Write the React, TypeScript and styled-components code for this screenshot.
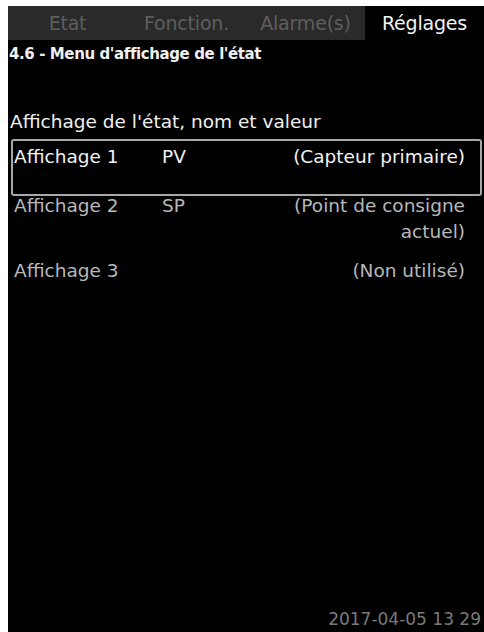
import styled, { createGlobalStyle } from 'styled-components'

const GlobalStyle = createGlobalStyle`
  html, body {
    margin: 0;
    background: #fff;
  }
`

const tabs = ['Etat', 'Fonction.', 'Alarme(s)', 'Réglages']

const rows = [
  { label: 'Affichage 1', code: 'PV', value: '(Capteur primaire)', selected: true },
  { label: 'Affichage 2', code: 'SP', value: '(Point de consigne actuel)', selected: false },
  { label: 'Affichage 3', code: '', value: '(Non utilisé)', selected: false }
]

export default function App () {
  return (
    <>
      <GlobalStyle />
      <Screen>
        <TabBar>
          {tabs.map((t, i) => (
            <Tab key={t} active={i === 3}>{t}</Tab>
          ))}
        </TabBar>
        <Breadcrumb>4.6 - Menu d'affichage de l'état</Breadcrumb>
        <SectionTitle>Affichage de l'état, nom et valeur</SectionTitle>
        <List>
          {rows.map(r => (
            <Row key={r.label} selected={r.selected}>
              <Label>{r.label}</Label>
              <Code>{r.code}</Code>
              <Value>{r.value}</Value>
            </Row>
          ))}
        </List>
        <Footer>2017-04-05 13 29</Footer>
      </Screen>
    </>
  )
}

const Screen = styled.div`
  display: flex;
  flex-direction: column;
  margin: 6px 0 0 8px;
  height: 626px;
  width: 476px;
  background: #000;
  font-family: 'DejaVu Sans', sans-serif;
  color: #fff;
`

const TabBar = styled.div`
  display: grid;
  grid-template-columns: repeat(4, 1fr);
  height: 34px;
  background: #2a2a2a;
`

const Tab = styled.div<{ active: boolean }>`
  display: flex;
  align-items: center;
  justify-content: center;
  font-size: 19px;
  letter-spacing: -0.2px;
  background: ${p => (p.active ? '#000' : 'transparent')};
  color: ${p => (p.active ? '#f2f2f2' : '#5e5e5e')};
`

const Breadcrumb = styled.div`
  padding: 5px 0 0 1px;
  font-size: 15px;
  font-weight: bold;
  letter-spacing: -0.4px;
  color: #f0f0f0;
`

const SectionTitle = styled.div`
  margin-top: 48px;
  padding-left: 2px;
  font-size: 18.5px;
  color: #f0f0f0;
`

const List = styled.div`
  display: flex;
  flex-direction: column;
  margin-top: 7px;
`

const Row = styled.div<{ selected: boolean }>`
  display: grid;
  grid-template-columns: 148px 1fr auto;
  align-items: start;
  margin: ${p => (p.selected ? '0 2px -3px 3px' : '0 2px 0 3px')};
  padding: ${p => (p.selected ? '3px 15px 24px 1px' : '0 17px 13px 3px')};
  border: ${p => (p.selected ? '2px solid #a8a8a8' : 'none')};
  border-radius: 3px;
  font-size: 18.5px;
  line-height: 26px;
  color: ${p => (p.selected ? '#f2f2f2' : '#b8b8b8')};
`

const Label = styled.span``

const Code = styled.span``

const Value = styled.span`
  max-width: 185px;
  text-align: right;
`

const Footer = styled.div`
  margin-top: auto;
  padding: 0 3px 3px 0;
  text-align: right;
  font-size: 17px;
  color: #7a7a7a;
`
